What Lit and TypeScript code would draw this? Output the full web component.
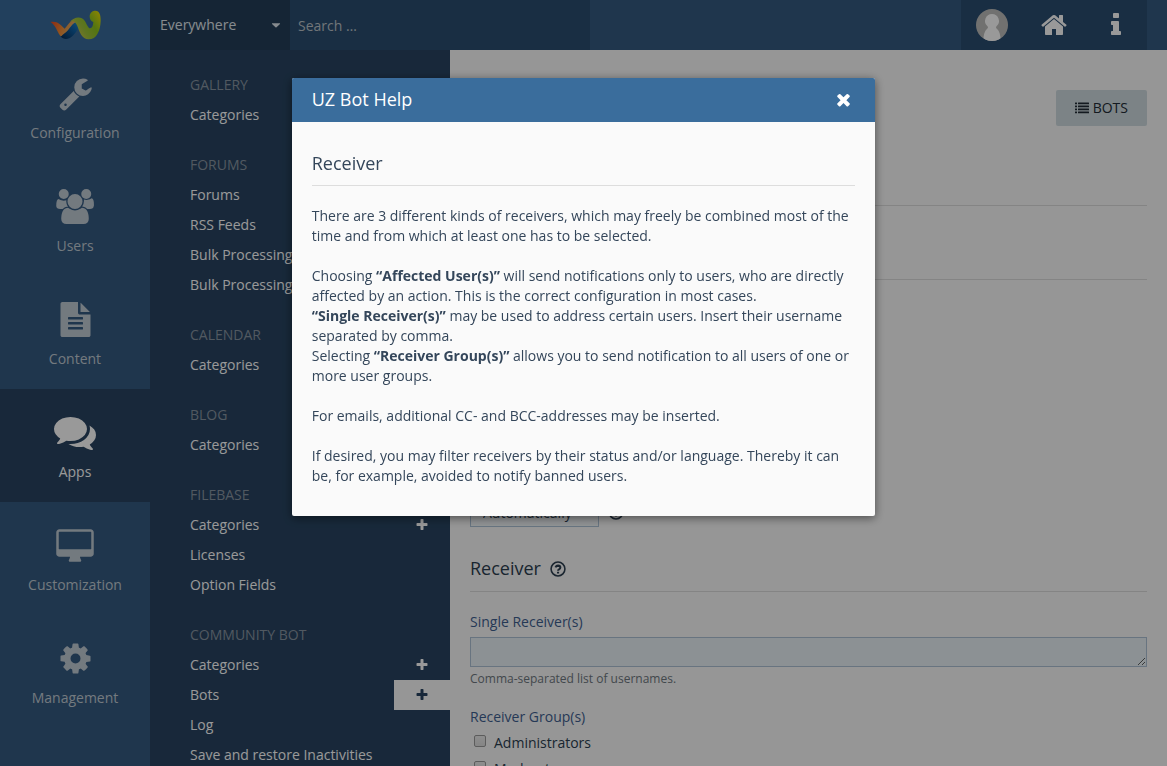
import { LitElement, html, css, svg, nothing } from "lit";
import { customElement, property } from "lit/decorators.js";

const FONT = css`"Open Sans", "Liberation Sans", sans-serif`;

const GLYPHS: Record<string, { w: number; shape: unknown }> = {
  wrench: {
    w: 1792,
    shape: svg`<path d="M448 1472q0-26-19-45t-45-19-45 19-19 45 19 45 45 19 45-19 19-45zm644-420l-682 682q-37 37-90 37-52 0-91-37l-106-108q-38-36-38-90 0-53 38-91l681-681q39 98 114.500 173.500t173.500 114.500zm634-435q0 39-23 106-47 134-164.500 217.500t-258.500 83.500q-185 0-316.500-131.500t-131.500-316.500 131.500-316.500 316.500-131.500q58 0 121.500 16.500t107.500 46.500q16 11 16 28t-16 28l-293 169v224l193 107q5-3 79-48.500t135.500-81 70.500-35.500q15 0 23.500 10t8.500 25z"/>`,
  },
  users: {
    w: 1920,
    shape: svg`<path d="M593 896q-162 5-265 128h-134q-82 0-138-40.500t-56-118.500q0-353 124-353 6 0 43.500 21t97.500 42.500 119 21.500q67 0 133-23-5 37-5 66 0 159 93 293zm1071 637q0 120-73 189.500t-194 69.500h-874q-121 0-194-69.500t-73-189.500q0-53 3.500-103.500t14-109 26.500-108.500 43-97.500 62-81 85.500-53.500 111.500-20q10 0 43 21.500t73 48 107 48 135 21.500 135-21.500 107-48 73-48 43-21.500q61 0 111.500 20t85.500 53.500 62 81 43 97.500 26.500 108.500 14 109 3.500 103.500zm-1024-1277q0 106-75 181t-181 75-181-75-75-181 75-181 181-75 181 75 75 181zm704 384q0 159-112.500 271.500t-271.500 112.500-271.500-112.500-112.500-271.500 112.500-271.500 271.500-112.500 271.500 112.500 112.500 271.500zm576 225q0 78-56 118.500t-138 40.500h-134q-103-123-265-128 93-134 93-293 0-29-5-66 66 23 133 23 59 0 119-21.500t97.500-42.500 43.500-21q124 0 124 353zm-128-609q0 106-75 181t-181 75-181-75-75-181 75-181 181-75 181 75 75 181z"/>`,
  },
  file: {
    w: 1792,
    shape: svg`<path d="M1596 476q14 14 28 36h-472v-472q22 14 36 28zm-476 164h544v1056q0 40-28 68t-68 28h-1344q-40 0-68-28t-28-68v-1600q0-40 28-68t68-28h800v544q0 40 28 68t68 28zm160 736v-64q0-14-9-23t-23-9h-704q-14 0-23 9t-9 23v64q0 14 9 23t23 9h704q14 0 23-9t9-23zm0-256v-64q0-14-9-23t-23-9h-704q-14 0-23 9t-9 23v64q0 14 9 23t23 9h704q14 0 23-9t9-23zm0-256v-64q0-14-9-23t-23-9h-704q-14 0-23 9t-9 23v64q0 14 9 23t23 9h704q14 0 23-9t9-23z"/>`,
  },
  comments: {
    w: 1792,
    shape: svg`<path d="M1408 768q0 139-94 257t-256.500 186.500-353.500 68.500q-86 0-176-16-124 88-278 128-36 9-86 16h-3q-11 0-20.500-8t-11.500-21q-1-3-1-6.500t.5-6.500 2-6l2.500-5 3.500-5.500 4-5 4.500-5 4-4.500q5-6 23-25t26-29.500 22.500-29 25-38.500 20.500-44q-124-72-195-177t-71-224q0-139 94-257t256.500-186.500 353.500-68.500 353.500 68.500 256.500 186.500 94 257zm384 256q0 120-71 224.500t-195 176.500q10 24 20.500 44t25 38.500 22.500 29 26 29.500 23 25q1 1 4 4.500t4.500 5 4 5 3.500 5.500l2.500 5 2 6 .5 6.500-1 6.500q-3 14-13 22t-22 7q-50-7-86-16-154-40-278-128-90 16-176 16-271 0-472-132 58 4 88 4 161 0 309-45t264-129q125-92 192-212t67-254q0-77-23-152 129 71 204 178t75 230z"/>`,
  },
  desktop: {
    w: 1920,
    shape: svg`<path transform="translate(0 64)" d="M1792 992v-832q0-13-9.500-22.500t-22.500-9.500h-1600q-13 0-22.500 9.500t-9.500 22.500v832q0 13 9.500 22.500t22.500 9.500h1600q13 0 22.500-9.500t9.500-22.500zm128-832v1088q0 66-47 113t-113 47h-544q0 37 16 77.500t32 71 16 43.500q0 26-19 45t-45 19h-512q-26 0-45-19t-19-45q0-14 16-44t32-70 16-78h-544q-66 0-113-47t-47-113v-1088q0-66 47-113t113-47h1600q66 0 113 47t47 113z"/>`,
  },
  cog: {
    w: 1792,
    shape: svg`<path d="M1152 896q0-106-75-181t-181-75-181 75-75 181 75 181 181 75 181-75 75-181zm512-109v222q0 12-8 23t-20 13l-185 28q-19 54-39 91 35 50 107 138 10 12 10 25t-9 23q-27 37-99 108t-94 71q-12 0-26-9l-138-108q-44 23-91 38-16 136-29 186-7 28-36 28h-222q-14 0-24.500-8.500t-11.500-21.500l-28-184q-49-16-90-37l-141 107q-10 9-25 9-14 0-25-11-126-114-165-168-7-10-7-23 0-12 8-23 15-21 51-66.500t54-70.500q-27-50-41-99l-183-27q-13-2-21-12.500t-8-23.500v-222q0-12 8-23t19-13l186-28q14-46 39-92-40-57-107-138-10-12-10-24 0-10 9-23 26-36 98.500-107.500t94.500-71.500q13 0 26 10l138 107q44-23 91-38 16-136 29-186 7-28 36-28h222q14 0 24.500 8.500t11.500 21.500l28 184q49 16 90 37l142-107q9-9 24-9 13 0 25 10 129 119 165 170 7 8 7 22 0 12-8 23-15 21-51 66.500t-54 70.500q26 50 41 98l183 28q13 2 21 12.500t8 23.500z"/>`,
  },
  home: {
    w: 1792,
    shape: svg`<path d="M1472 992v480q0 26-19 45t-45 19h-384v-384h-256v384h-384q-26 0-45-19t-19-45v-480q0-1 .5-3t.5-3l575-474 575 474q1 2 1 6zm223-69l-62 74q-8 9-21 11h-3q-13 0-21-7l-692-577-692 577q-12 8-24 7-13-2-21-11l-62-74q-8-10-7-23.500t11-21.500l719-599q32-26 76-26t76 26l244 204v-195q0-14 9-23t23-9h192q14 0 23 9t9 23v408l219 182q10 8 11 21.500t-7 23.500z"/>`,
  },
  info: {
    w: 1792,
    shape: svg`<path d="M1216 1344v128q0 26-19 45t-45 19h-512q-26 0-45-19t-19-45v-128q0-26 19-45t45-19h64v-384h-64q-26 0-45-19t-19-45v-128q0-26 19-45t45-19h384q26 0 45 19t19 45v576h64q26 0 45 19t19 45zm-128-1152v192q0 26-19 45t-45 19h-256q-26 0-45-19t-19-45v-192q0-26 19-45t45-19h256q26 0 45 19t19 45z"/>`,
  },
  plus: {
    w: 1792,
    shape: svg`<path d="M1600 736v192q0 40-28 68t-68 28h-416v416q0 40-28 68t-68 28h-192q-40 0-68-28t-28-68v-416h-416q-40 0-68-28t-28-68v-192q0-40 28-68t68-28h416v-416q0-40 28-68t68-28h192q40 0 68 28t28 68v416h416q40 0 68 28t28 68z"/>`,
  },
  times: {
    w: 1792,
    shape: svg`<path d="M1490 1322q0 40-28 68l-136 136q-28 28-68 28t-68-28l-294-294-294 294q-28 28-68 28t-68-28l-136-136q-28-28-28-68t28-68l294-294-294-294q-28-28-28-68t28-68l136-136q28-28 68-28t68 28l294 294 294-294q28-28 68-28t68 28l136 136q28 28 28 68t-28 68l-294 294 294 294q28 28 28 68z"/>`,
  },
  list: {
    w: 1792,
    shape: svg`${[256, 640, 1024, 1408].map(
      (y) => svg`<rect x="0" y=${y - 64} width="256" height="230" rx="32"/><rect x="384" y=${y - 64} width="1408" height="230" rx="32"/>`
    )}`,
  },
  help: {
    w: 1792,
    shape: svg`<circle cx="896" cy="896" r="690" fill="none" stroke="currentColor" stroke-width="156"/><path d="M640 730Q720 560 900 560Q1130 570 1130 745Q1130 860 1000 925Q900 975 900 1080" fill="none" stroke="currentColor" stroke-width="200"/><rect x="796" y="1160" width="210" height="190" rx="30"/>`,
  },
  caret: {
    w: 1792,
    shape: svg`<path d="M320 640h1152q60 20 20 90l-520 510q-76 60-152 0l-520-510q-40-70 20-90z"/>`,
  },
};

@customElement("app-icon")
export class AppIcon extends LitElement {
  @property() name = "";
  @property({ type: Number }) size = 14;

  static styles = css`
    :host {
      display: inline-flex;
      align-items: center;
      justify-content: center;
    }
    svg {
      display: block;
      flex: none;
      fill: currentColor;
      overflow: visible;
    }
  `;

  render() {
    const g = GLYPHS[this.name];
    if (!g) return nothing;
    return html`<svg
      aria-hidden="true"
      width=${Math.round((this.size * g.w) / 1792)}
      height=${this.size}
      viewBox="0 0 ${g.w} 1792"
    >${g.shape}</svg>`;
  }
}

@customElement("top-bar")
export class TopBar extends LitElement {
  static styles = css`
    :host {
      display: flex;
      height: 50px;
      background: #355a80;
      color: #fff;
      font: 14px/20px ${FONT};
    }
    a {
      color: inherit;
      text-decoration: none;
    }
    .logo {
      flex: 0 0 150px;
      display: flex;
      align-items: center;
      justify-content: center;
      background: #3a6c9c;
    }
    .search {
      display: flex;
      flex: 0 1 440px;
      min-width: 0;
    }
    .scope {
      flex: 0 0 140px;
      box-sizing: border-box;
      padding: 0 10px;
      display: flex;
      align-items: center;
      justify-content: space-between;
      border: 0;
      background: #233f59;
      color: #e0e8ee;
      font: inherit;
    }
    .scope app-icon {
      width: 8px;
    }
    input {
      flex: 1;
      min-width: 0;
      border: 0;
      padding: 2px 8px 0;
      background: #2b4d70;
      color: #fff;
      font: inherit;
    }
    input::placeholder {
      color: #bcc4ca;
      opacity: 1;
    }
    .user {
      display: flex;
      margin: 0 20px 0 auto;
      background: #2b4d70;
    }
    .user a {
      width: 62px;
      display: flex;
      align-items: center;
      justify-content: center;
    }
  `;

  render() {
    return html`
      <a class="logo" href="#" aria-label="Home">
        <svg width="52" height="30" viewBox="149 30 156 90">
          <defs>
            <linearGradient id="o" x1="0" y1="0" x2="1" y2="0.3">
              <stop offset="0" stop-color="#f03c1c" />
              <stop offset="0.5" stop-color="#f28a34" />
              <stop offset="1" stop-color="#d8c07a" />
            </linearGradient>
            <linearGradient id="b" x1="0" y1="0.8" x2="1" y2="0">
              <stop offset="0" stop-color="#052b55" />
              <stop offset="0.6" stop-color="#0f63a8" />
              <stop offset="1" stop-color="#2a90c8" />
            </linearGradient>
            <linearGradient id="g" x1="0" y1="0.6" x2="1" y2="0">
              <stop offset="0" stop-color="#d8c64a" />
              <stop offset="0.3" stop-color="#9fc43a" />
              <stop offset="0.6" stop-color="#8cc41e" />
              <stop offset="1" stop-color="#f4e000" />
            </linearGradient>
          </defs>
          <path fill="url(#b)" d="M176 94C186 102 204 86 214 74C222 62 232 56 240 62C244 78 232 96 222 106C211 119 192 121 184 109Z" />
          <path fill="url(#o)" d="M154 66C173 62 184 74 196 86C204 78 216 56 236 54L240 64C218 64 210 92 198 98C190 103 188 108 184 109C174 98 170 76 154 66Z" />
          <path fill="url(#g)" d="M212 66C224 50 246 48 256 62C263 73 266 84 272 85C279 84 281 77 282 66C272 62 271 54 271 47C273 36 281 32 288 32C301 33 304 44 304 62C303 92 292 118 268 118C247 118 240 94 234 78C229 66 222 61 212 66Z" />
        </svg>
      </a>
      <div class="search">
        <button class="scope" type="button">Everywhere<app-icon name="caret" size="12"></app-icon></button>
        <input type="search" aria-label="Search" placeholder="Search …" />
      </div>
      <nav class="user">
        <a href="#" aria-label="Profile">
          <svg width="32" height="32" viewBox="0 0 32 32">
            <defs><clipPath id="c"><circle cx="16" cy="16" r="16" /></clipPath></defs>
            <g clip-path="url(#c)">
              <rect width="32" height="32" fill="#bdbdbb" />
              <path fill="#fff" d="M16 5a7 7 0 0 1 4.500 12.300c-.8.9-.6 1.700.4 2.500C23.500 22 24.600 26 24.600 32H7.400c0-6 1.100-10 3.700-12.200 1-.8 1.200-1.600.4-2.500A7 7 0 0 1 16 5z" />
            </g>
          </svg>
        </a>
        <a href="#" aria-label="Front page"><app-icon name="home" size="28"></app-icon></a>
        <a href="#" aria-label="Information"><app-icon name="info" size="28"></app-icon></a>
      </nav>
    `;
  }
}

const AREAS = [
  { label: "Configuration", icon: "wrench" },
  { label: "Users", icon: "users" },
  { label: "Content", icon: "file" },
  { label: "Apps", icon: "comments", active: true },
  { label: "Customization", icon: "desktop" },
  { label: "Management", icon: "cog" },
];

type Entry = { label: string; add?: boolean; active?: boolean };
const MENU: { title: string; items: Entry[] }[] = [
  { title: "Gallery", items: [{ label: "Categories", add: true }] },
  {
    title: "Forums",
    items: [
      { label: "Forums", add: true },
      { label: "RSS Feeds", add: true },
      { label: "Bulk Processing" },
      { label: "Bulk Processing" },
    ],
  },
  { title: "Calendar", items: [{ label: "Categories", add: true }] },
  { title: "Blog", items: [{ label: "Categories", add: true }] },
  {
    title: "Filebase",
    items: [{ label: "Categories", add: true }, { label: "Licenses" }, { label: "Option Fields" }],
  },
  {
    title: "Community Bot",
    items: [
      { label: "Categories", add: true },
      { label: "Bots", add: true, active: true },
      { label: "Log" },
      { label: "Save and restore Inactivities" },
    ],
  },
];

@customElement("side-menu")
export class SideMenu extends LitElement {
  static styles = css`
    :host {
      display: flex;
      min-height: 0;
      font: 14px/20px ${FONT};
    }
    a {
      color: inherit;
      text-decoration: none;
    }
    .areas {
      width: 150px;
      background: #355a80;
    }
    .area {
      display: flex;
      flex-direction: column;
      align-items: center;
      gap: 6px;
      padding: 19px 0 20px;
      color: #c0cbd4;
    }
    .area app-icon {
      height: 48px;
    }
    .area.active {
      background: #284461;
      color: #fff;
    }
    .menu {
      width: 300px;
      box-sizing: border-box;
      padding-top: 20px;
      background: #284461;
      color: #fff;
      overflow: hidden;
    }
    section {
      margin-bottom: 20px;
    }
    h2,
    .entry > a:first-child {
      margin: 0;
      padding: 5px 0 5px 40px;
      font-size: 14px;
      font-weight: 400;
      line-height: 20px;
      white-space: nowrap;
    }
    h2 {
      text-transform: uppercase;
      color: #8895a2;
    }
    .entry {
      display: flex;
    }
    .entry > a:first-child {
      flex: 1;
    }
    .add {
      width: 56px;
      display: flex;
      align-items: center;
      justify-content: center;
    }
    .active .add {
      background: #fafafa;
      color: #284461;
    }
  `;

  render() {
    return html`
      <nav class="areas">
        ${AREAS.map(
          (a) => html`<a class="area ${a.active ? "active" : ""}" href="#">
            <app-icon name=${a.icon} size=${a.active ? 42 : 35}></app-icon><span>${a.label}</span>
          </a>`
        )}
      </nav>
      <nav class="menu">
        ${MENU.map(
          (s) => html`<section>
            <h2>${s.title}</h2>
            ${s.items.map(
              (i) => html`<div class="entry ${i.active ? "active" : ""}">
                <a href="#">${i.label}</a>
                ${i.add
                  ? html`<a class="add" href="#" aria-label="Add"><app-icon name="plus" size="14"></app-icon></a>`
                  : nothing}
              </div>`
            )}
          </section>`
        )}
      </nav>
    `;
  }
}

@customElement("bot-form")
export class BotForm extends LitElement {
  static styles = css`
    :host {
      display: block;
      padding: 40px 20px 0;
      background: #fafafa;
      color: #2c3e50;
      font: 14px/20px ${FONT};
      overflow: hidden;
    }
    .head {
      display: flex;
      justify-content: flex-end;
      align-items: flex-start;
      padding-bottom: 79px;
      border-bottom: 1px solid #ddd;
    }
    .button {
      display: flex;
      align-items: center;
      gap: 4px;
      padding: 8px 19px;
      border: 0;
      border-radius: 2px;
      background: #cfdbdf;
      color: #222c36;
      font: inherit;
      text-transform: uppercase;
    }
    .tabs {
      height: 73px;
      border-bottom: 1px solid #ddd;
    }
    .general {
      display: flex;
      align-items: center;
      gap: 8px;
      padding-top: 217px;
    }
    select,
    textarea {
      box-sizing: border-box;
      height: 30px;
      margin: 0;
      border: 1px solid #adc2d6;
      border-radius: 0;
      background: #e9f2f7;
      color: #2c3e50;
      font: inherit;
    }
    select {
      appearance: none;
      width: 129px;
      padding: 2px 12px 0;
      background: #f2f6f9;
    }
    h2 {
      display: flex;
      align-items: center;
      gap: 8px;
      margin: 30px 0 20px;
      padding-bottom: 11px;
      border-bottom: 1px solid #ddd;
      font-size: 18px;
      font-weight: 400;
      line-height: 23px;
    }
    .label {
      display: block;
      color: #3f5f90;
      padding: 0;
    }
    textarea {
      display: block;
      width: 100%;
      margin-top: 5px;
      padding: 4px 8px;
    }
    small {
      display: block;
      margin-top: 3px;
      color: #6f7880;
      font-size: 12px;
      line-height: 18px;
    }
    fieldset {
      margin: 19px 0 0;
      padding: 0;
      border: 0;
    }
    legend {
      margin-bottom: 2px;
    }
    .check {
      display: flex;
      align-items: center;
      gap: 8px;
      margin-top: 2px;
      padding-left: 4px;
      height: 24px;
    }
    .check input {
      appearance: none;
      box-sizing: border-box;
      width: 12px;
      height: 12px;
      margin: 0 0 4px;
      border: 1px solid #9a9a9a;
      border-radius: 2px;
      background: linear-gradient(#ededed, #dedede);
    }
  `;

  render() {
    return html`
      <div class="head">
        <button class="button" type="button"><app-icon name="list" size="14"></app-icon>Bots</button>
      </div>
      <div class="tabs"></div>
      <div class="general">
        <select aria-label="Mode"><option>Automatically</option></select>
        <app-icon name="help" size="18"></app-icon>
      </div>
      <h2>Receiver <app-icon name="help" size="18"></app-icon></h2>
      <label class="label" for="single">Single Receiver(s)</label>
      <textarea id="single" rows="1"></textarea>
      <small>Comma-separated list of usernames.</small>
      <fieldset>
        <legend class="label">Receiver Group(s)</legend>
        ${["Administrators", "Moderators"].map(
          (g) => html`<label class="check"><input type="checkbox" />${g}</label>`
        )}
      </fieldset>
    `;
  }
}

@customElement("help-dialog")
export class HelpDialog extends LitElement {
  static styles = css`
    :host {
      position: fixed;
      inset: 0;
      display: flex;
      align-items: flex-start;
      justify-content: center;
      padding-top: 78px;
      background: rgba(0, 0, 0, 0.4);
      color: #34465a;
      font: 14px/20px ${FONT};
    }
    .dialog {
      width: 50%;
      background: #fafafa;
      border-radius: 2px;
      box-shadow: 0 2px 10px rgba(0, 0, 0, 0.5);
      overflow: hidden;
    }
    header {
      display: flex;
      align-items: center;
      justify-content: space-between;
      padding: 9px 20px 11px;
      background: #3a6d9c;
      color: #fff;
    }
    h1 {
      margin: 0;
      font-size: 18px;
      font-weight: 400;
      line-height: 24px;
    }
    button {
      display: flex;
      width: 24px;
      height: 24px;
      padding: 0;
      align-items: center;
      justify-content: center;
      border: 0;
      background: none;
      color: inherit;
    }
    .body {
      padding: 30px 20px;
    }
    h2 {
      margin: 0 0 20px;
      padding-bottom: 10px;
      border-bottom: 1px solid #ddd;
      font-size: 18px;
      font-weight: 400;
      line-height: 23px;
    }
    p {
      margin: 0 0 20px;
    }
    p:last-child {
      margin: 0;
    }
    b {
      font-weight: 700;
    }
  `;

  render() {
    return html`
      <div class="dialog" role="dialog" aria-labelledby="title">
        <header>
          <h1 id="title">UZ Bot Help</h1>
          <button type="button" aria-label="Close"><app-icon name="times" size="19"></app-icon></button>
        </header>
        <div class="body">
          <h2>Receiver</h2>
          <p>There are 3 different kinds of receivers, which may freely be combined most of the time and from which at least one has to be selected.</p>
          <p>
            Choosing <b>“Affected User(s)”</b> will send notifications only to users, who are directly affected by an action. This is the correct configuration in most cases.<br />
            <b>“Single Receiver(s)”</b> may be used to address certain users. Insert their username separated by comma.<br />
            Selecting <b>“Receiver Group(s)”</b> allows you to send notification to all users of one or more user groups.
          </p>
          <p>For emails, additional CC- and BCC-addresses may be inserted.</p>
          <p>If desired, you may filter receivers by their status and/or language. Thereby it can be, for example, avoided to notify banned users.</p>
        </div>
      </div>
    `;
  }
}

@customElement("app-root")
export class AppRoot extends LitElement {
  static styles = css`
    :host {
      display: grid;
      grid-template: auto minmax(0, 1fr) / auto minmax(0, 1fr);
      height: 100vh;
      overflow: hidden;
    }
    top-bar {
      grid-column: 1 / -1;
    }
  `;

  render() {
    return html`
      <top-bar></top-bar>
      <side-menu></side-menu>
      <bot-form></bot-form>
      <help-dialog></help-dialog>
    `;
  }
}
